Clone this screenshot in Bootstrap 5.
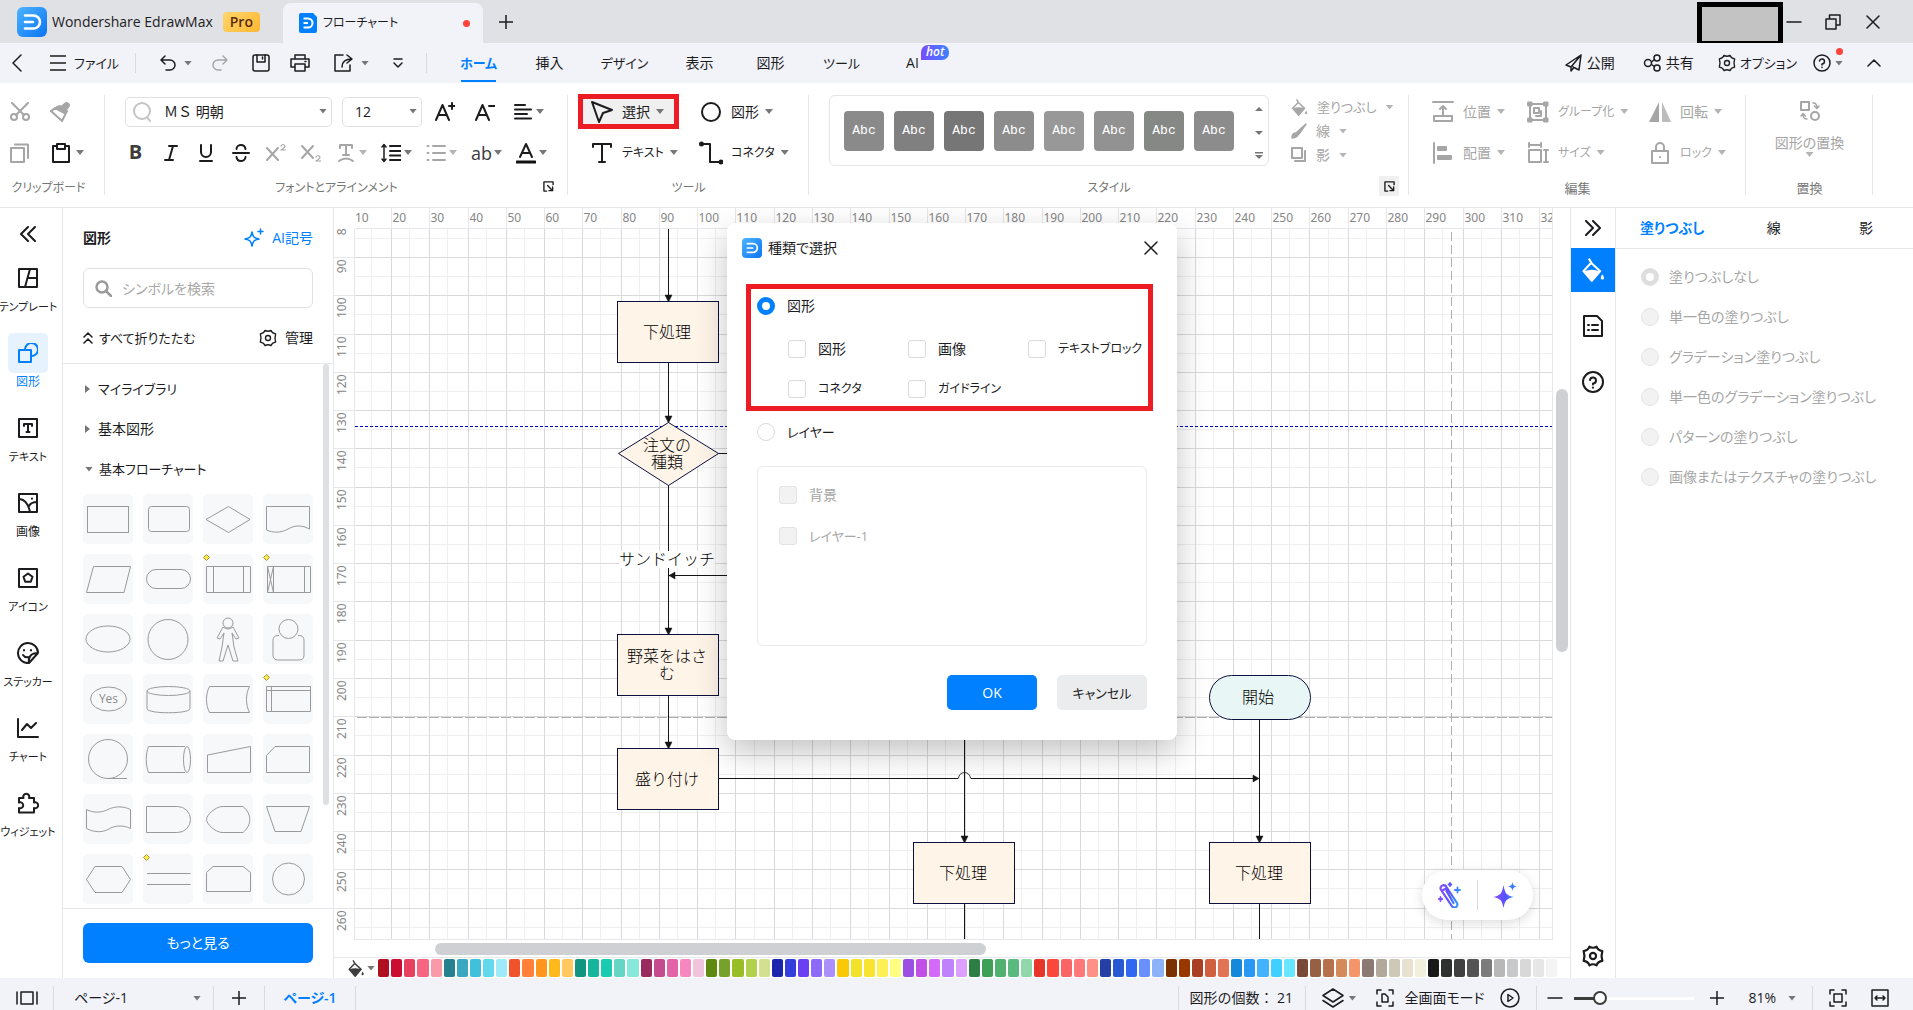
<!DOCTYPE html>
<html lang="ja">
<head>
<meta charset="utf-8">
<meta name="viewport" content="width=device-width, initial-scale=1">
<title>フローチャート - Wondershare EdrawMax</title>
<link href="https://cdn.jsdelivr.net/npm/bootstrap@5.3.0/dist/css/bootstrap.min.css" rel="stylesheet">
<style>
:root{--blue:#0080ff;--ink:#1c1c1e;--dim:#a6a6a6;--rule:#e6e7ea;--bar:#f2f3f9;--mark:#ed1c24}
body{font-family:"Open Sans","Noto Sans CJK JP",sans-serif;font-size:14px;line-height:20px;color:var(--ink);font-feature-settings:"palt";height:100vh;overflow:hidden;background:#fff}
button,select,input{font-feature-settings:inherit}
button{border:0;background:none;padding:0;color:inherit;font-size:inherit;white-space:nowrap}
a{color:inherit;text-decoration:none}
svg{display:block;flex:none}
.ic{fill:none;stroke:currentColor;stroke-width:1.5;stroke-linejoin:round;stroke-linecap:round}
.thick{stroke-width:2}
.kn{font-size:13px}
.kn-s{font-size:12px}
.caret-s{width:8px;height:5px;flex:none;background:#777;clip-path:polygon(0 0,100% 0,50% 100%)}
.dim{color:var(--dim)}
.dim .caret-s{background:#b4b4b4}
.vline{width:1px;background:#d8d9de;flex:none}
/* title bar */
.titlebar{height:43px;background:#e0e1e5}
.brand{width:283px;padding-left:17px;gap:5px;font-size:14px}
.pro{background:linear-gradient(135deg,#ffd56b,#fdb833);color:#5a2c0a;border-radius:4px;height:20px;padding:0 7px;margin-left:5px;font-weight:600}
.doctab{width:200px;height:40px;background:var(--bar);border-radius:8px 8px 0 0;padding:0 13px 0 16px;gap:6px;font-size:12px}
.reddot{width:7px;height:7px;border-radius:50%;background:#ff453a}
.redact{width:86px;height:44px;border:5px solid #000;background:#c3c3c3}
.winbtn{width:40px;height:40px}
/* menu bar */
.menubar{height:40px;background:var(--bar)}
.menubar .mtab{width:71px;text-align:center;line-height:40px;position:relative;font-size:14px}
.menubar .mtab.kn{font-size:13px}
.menubar .mtab.active{color:var(--blue);font-weight:600}
.menubar .mtab.active::after{content:"";position:absolute;left:18px;right:18px;bottom:1px;height:2px;background:var(--blue)}
.hot{position:absolute;left:44px;top:2px;height:15px;padding:0 5px;border-radius:7px 7px 7px 0;background:linear-gradient(90deg,#7a4dff,#3b82ff);color:#fff;font-size:12px;line-height:14px;font-style:italic;font-weight:600}
.mbtn{height:40px}
.filebtn{width:89px}
.quick{width:290px;padding-left:20px}
.helpdot{position:absolute;right:0;top:-6px}
/* ribbon */
.ribbon{height:125px;border-bottom:1px solid var(--rule);padding-top:11px}
.rgroup{position:relative;height:106px;flex:none}
.rgroup::after{content:"";position:absolute;right:0;top:1px;height:100px;width:1px;background:#e4e5e8}
.rrow{height:35px;margin-bottom:6px}
.rlabel{font-size:12px;color:#777;line-height:24px;text-align:center}
.rlabel.kj{font-size:13px}
.rb{height:35px}
.sq{width:40px}
.sq35{width:35px}
.split{width:45px;padding-left:8px;gap:3px}
.glyph{font-size:20px;line-height:20px;color:#3c3c3c;width:20px;text-align:center}
.fsel{height:30px;border:1px solid #e0e1e5;border-radius:5px;font-size:14px;color:var(--ink);appearance:none;background:transparent;padding:0 20px 0 38px;width:100%;line-height:20px}
.fsel.wide{font-feature-settings:normal}
.selwrap{position:relative;height:30px}
.selwrap .caret-s{position:absolute;right:5px;top:12px}
.selwrap svg{position:absolute;left:7px;top:5px}
.tb{height:35px;padding-left:12px;gap:8px}
.tb .caret-s{margin-left:-2px}
.annot{border:5px solid var(--mark);background:#f0f0f0;padding-left:7px;width:101px}
.gallery{border:1px solid #e6e6e9;border-radius:6px;width:440px;height:71px;padding:0 5px 0 14px;gap:10px}
.gs{width:40px;height:40px;border-radius:4px;color:#fff;font:13px/40px "Liberation Mono",monospace}
.stylebtns{padding:1px 0 0 22px}
.stylebtns button{height:24px;gap:9px}
.launch{position:absolute;right:10px;bottom:4px;width:20px;height:20px}
.editgrid{display:grid;grid-template-columns:95px 122px 1fr;grid-auto-rows:35px;row-gap:6px;padding-left:14px;margin-bottom:6px}
.editgrid .tb{padding-left:8px}
/* left rail */
.rail{width:63px;border-right:1px solid var(--rule);padding-top:6px;overflow:hidden;flex:none}
.railitem{height:75px;width:56px;font-size:12px;line-height:18px;color:var(--ink);padding-top:4px}
.railitem.small11{font-size:11px}
.railitem .tile{width:40px;height:40px;border-radius:5px}
.railitem.active{color:var(--blue)}
.railitem.active .tile{background:#e6f3ff}
/* symbol panel */
.sympanel{width:271px;border-right:1px solid var(--rule);flex:none}
.search{height:40px;border:1px solid #e0e1e5;border-radius:6px;padding-left:38px;font-size:14px;width:100%}
.search::placeholder{color:#a8a8a8}
.liblist{border-top:1px solid var(--rule);border-bottom:1px solid var(--rule);position:relative;padding-top:5px}
.libitem{height:40px;gap:8px;padding-left:2px;font-size:13px}
.tri{width:5px;height:8px;background:#777;clip-path:polygon(0 0,100% 50%,0 100%)}
.shapes{display:grid;grid-template-columns:repeat(4,50px);gap:10px;padding-top:5px}
.shapes button{height:50px;background:#f7f8fa;border-radius:5px}
.thumb{background:#cfd0d3;border-radius:6px}
.btn-main{background:var(--blue);color:#fff;border-radius:6px}
/* canvas */
.stage{display:grid;grid-template-columns:21px minmax(0,1fr) 17px;grid-template-rows:21px minmax(0,1fr) 17px 21px;position:relative;min-width:0}
.stage text{fill:#868686;font-size:12px;font-family:"Noto Sans",sans-serif}
.stage .node text{fill:#000;font:300 16px "Noto Sans CJK JP",sans-serif;font-feature-settings:normal;text-anchor:middle}
.ruler-x{border-bottom:1px solid var(--rule);border-right:1px solid var(--rule)}
.ruler-y{border-right:1px solid var(--rule)}
.clip{overflow:hidden;min-width:0;min-height:0}
.palette{grid-column:1/-1;border-top:1px solid var(--rule);padding:1px 0 1px 13px;gap:3px}
.sw{flex:1 1 0;height:18px;border-radius:2px}
.floatpill{position:absolute;right:37px;bottom:58px;width:111px;height:50px;border-radius:25px;background:#fff;box-shadow:0 3px 12px rgba(0,0,0,.14)}
/* dialog */
.dlgwrap{position:absolute;left:0;right:0;top:15px;z-index:5;pointer-events:none}
.dlg{width:450px;height:517px;background:#fff;border-radius:8px;box-shadow:0 12px 32px rgba(0,0,0,.24);pointer-events:auto;padding:0 30px 30px 19px}
.dlg-head{height:50px;margin:0 -11px 11px -4px;gap:6px}
.dlg-mark{border:5px solid var(--mark);height:127px;padding:7px 5px 0 6px;margin-right:-6px}
.form-check-input{margin:0;float:none;flex:none;width:18px;height:18px;border:1px solid #d9dade;background-color:#fff}
.form-check-input[type=checkbox]{border-radius:3px}
.form-check-input[type=radio]:checked{background:#fff;border:5px solid var(--blue)}
.form-check-input:disabled{opacity:1;background-color:#f2f2f2;border-color:#e4e4e4}
.form-check-input[type=radio]:disabled:checked{border-color:#dedede}
.form-check-label{white-space:nowrap}
.form-check-input:disabled~.form-check-label{opacity:1;color:var(--dim)}
.ck{gap:12px}
.ckgrid{display:grid;grid-template-columns:120px 120px 1fr;grid-auto-rows:40px;padding:13px 0 0 31px}
.layerbox{border:1px solid #e8e9ec;border-radius:6px;height:180px;margin-left:11px;padding:7px 21px}
.layerbox>div{height:41px}
.dbtn{width:90px;height:35px;border-radius:5px}
/* right side */
.rrail{width:46px;border-left:1px solid var(--rule);border-right:1px solid var(--rule);flex:none}
.rrail button{width:44px;height:44px}
.props{width:297px;flex:none}
.ptabs{height:41px;border-bottom:1px solid var(--rule);padding:0 40px 0 24px;font-size:14px}
.ptabs>:first-child{margin-right:-16px}
.props .optrow{height:40px;gap:10px;padding-left:25px}
/* status bar */
.status{height:32px;background:var(--bar);padding-top:8px;flex:none}
.status>*{height:24px}
.zoombar{appearance:none;width:120px;background:transparent}
.zoombar::-webkit-slider-runnable-track{height:3px;background:linear-gradient(90deg,#3c3c3c 20%,#fff 20%)}
.zoombar::-webkit-slider-thumb{-webkit-appearance:none;width:14px;height:14px;border-radius:50%;border:2px solid #3c3c3c;background:#fff;margin-top:-6px}
</style>
<script src="https://cdn.jsdelivr.net/npm/bootstrap@5.3.0/dist/js/bootstrap.bundle.min.js"></script>
</head>
<body class="d-flex flex-column">
<svg width="0" height="0" class="position-absolute" aria-hidden="true">
 <defs>
  <linearGradient id="lg" x1="0" y1="0" x2="1" y2="1"><stop offset="0" stop-color="#4db4ff"/><stop offset="1" stop-color="#0a74f5"/></linearGradient>
  <linearGradient id="pg" x1="0" y1="0" x2="1" y2="0"><stop offset="0" stop-color="#8a4dff"/><stop offset=".5" stop-color="#5a50ff"/><stop offset="1" stop-color="#2f9bff"/></linearGradient>
  <symbol id="logo" viewBox="0 0 30 30"><rect width="30" height="30" rx="6" fill="url(#lg)"/><path d="M8 8.500h8.500a6.500 6.500 0 0 1 0 13H8M8 15h8" fill="none" stroke="#fff" stroke-width="2.600" stroke-linecap="round"/></symbol>
  <symbol id="gear" viewBox="0 0 20 20"><path d="M6.800 1.500Q10 3.500 13.200 1.500Q14.500 5 18.500 5.500Q17 10 18.500 14.500Q14.500 15 13.200 18.500Q10 16.500 6.800 18.500Q5.500 15 1.500 14.500Q3 10 1.500 5.500Q5.500 5 6.800 1.500z"/><circle cx="10" cy="10" r="2.800"/></symbol>
  <symbol id="launch" viewBox="0 0 12 12"><path d="M11 4V1H1v10h3M5 5l5 5M10.500 6.500v4h-4"/></symbol>
  <symbol id="drop" viewBox="0 0 20 20"><path d="M6.500 .5L9 4.500 16 11 9 19 2 11 8.500 4" fill="none" stroke="currentColor" stroke-width="1.700" stroke-linejoin="round"/><path d="M2.500 11Q9 8.500 15.500 11L9 18.500z" fill="currentColor"/><path d="M17.800 13.500c2 3 1.500 4.500 0 4.500s-2-1.500 0-4.500z" fill="currentColor"/></symbol>
 </defs>
</svg>

<header class="titlebar d-flex align-items-end flex-shrink-0">
 <div class="brand d-flex align-items-center h-100">
  <svg width="30" height="30"><use href="#logo"/></svg><span class="text-nowrap">Wondershare EdrawMax</span><span class="pro">Pro</span>
 </div>
 <div class="doctab d-flex align-items-center">
  <svg width="18" height="20" viewBox="0 0 18 20"><path d="M2 0h12l4 4v14a2 2 0 0 1-2 2H2a2 2 0 0 1-2-2V2a2 2 0 0 1 2-2z" fill="#0080ff"/><path d="M4.500 5.500H9a4.500 4.500 0 0 1 0 9H4.500M4.500 10H9" fill="none" stroke="#fff" stroke-width="2"/></svg>
  <span class="flex-grow-1">フローチャート</span><span class="reddot"></span>
 </div>
 <button class="d-flex align-items-center justify-content-center h-100 px-3" aria-label="新しいタブ"><svg class="ic" width="14" height="14" viewBox="0 0 14 14"><path d="M7 0v14M0 7h14"/></svg></button>
 <div class="ms-auto d-flex align-items-center me-3 h-100">
  <div class="redact mt-1"></div>
  <button class="winbtn w-auto" aria-label="最小化"><svg class="ic" width="22" height="14" viewBox="0 0 22 14"><path d="M4 7h14"/></svg></button>
  <button class="winbtn ms-2" aria-label="元のサイズに戻す"><svg class="ic m-auto" width="16" height="16" viewBox="0 0 16 16"><path d="M1 5h10v10H1zM4.500 5V1H15v10h-4"/></svg></button>
  <button class="winbtn me-1" aria-label="閉じる"><svg class="ic m-auto" width="14" height="14" viewBox="0 0 14 14"><path d="M1 1l12 12M13 1L1 13"/></svg></button>
 </div>
</header>

<nav class="menubar d-flex align-items-center flex-shrink-0">
 <button class="mbtn px-2 ms-1" aria-label="戻る"><svg class="ic" width="10" height="18" viewBox="0 0 10 18"><path d="M9 1L1 9l8 8"/></svg></button>
 <button class="mbtn filebtn d-flex align-items-center gap-2 ms-3 ps-1 kn"><svg class="ic" width="16" height="16" viewBox="0 0 16 16"><path d="M0 1h16M0 8h16M0 15h16"/></svg>ファイル</button>
 <span class="vline ms-n1" style="height:20px"></span>
 <div class="d-flex align-items-center quick">
  <button class="d-flex align-items-center gap-2 ps-1" aria-label="元に戻す"><svg class="ic" width="16" height="16" viewBox="0 0 16 16"><path d="M5 1L1 5l4 4M1 5h9a5 5 0 0 1 0 10H6"/></svg><i class="caret-s"></i></button>
  <button class="dim ms-3 ps-1" aria-label="やり直し"><svg class="ic" width="16" height="16" viewBox="0 0 16 16"><path d="M11 1l4 4-4 4M15 5H6a5 5 0 0 0 0 10h3"/></svg></button>
  <button class="ms-4" aria-label="保存"><svg class="ic" width="18" height="18" viewBox="0 0 18 18"><rect x="1" y="1" width="16" height="16" rx="2"/><path d="M5 1v7h8V1M10.500 3v2"/></svg></button>
  <button class="ms-3 ps-1" aria-label="印刷"><svg class="ic" width="20" height="18" viewBox="0 0 20 18"><path d="M5 5V1h10v4M5 13H1V5h18v8h-4M5 10h10v7H5zM15 7.500h1"/></svg></button>
  <button class="d-flex align-items-center gap-2 ms-4" aria-label="エクスポート"><svg class="ic" width="19" height="18" viewBox="0 0 19 18"><path d="M9 1H1v16h15v-6M13 1l5 4-5 4M18 5c-6 0-10 2-10 8"/></svg><i class="caret-s"></i></button>
  <button class="ms-4" aria-label="カスタマイズ"><svg class="ic" width="10" height="10" viewBox="0 0 10 10"><path d="M1 1h8M1 5l4 4 4-4"/></svg></button>
 </div>
 <span class="vline" style="height:20px"></span>
 <a class="mtab active kn ms-3" href="#">ホーム</a><a class="mtab" href="#">挿入</a><a class="mtab kn ms-1" href="#">デザイン</a><a class="mtab ms-1" href="#">表示</a><a class="mtab" href="#">図形</a><a class="mtab kn" href="#">ツール</a><a class="mtab ms-n2" href="#">AI<span class="hot">hot</span></a>
 <div class="ms-auto d-flex align-items-center">
  <button class="d-flex align-items-center gap-1 me-4 pe-1"><svg class="ic" width="18" height="18" viewBox="0 0 18 18"><path d="M16 1L1 11l5 2 10-12-2 15-6-3M6 13v4l2.500-3"/></svg>公開</button>
  <button class="d-flex align-items-center gap-1 me-4"><svg class="ic" width="19" height="18" viewBox="0 0 19 18"><circle cx="5" cy="9" r="3.500"/><circle cx="14" cy="4" r="3"/><circle cx="14" cy="14" r="3"/><path d="M8.500 8l3-2.500M8.500 10.500l3 2"/></svg>共有</button>
  <button class="d-flex align-items-center gap-1 me-3 kn"><svg class="ic" width="18" height="18"><use href="#gear"/></svg>オプション</button>
  <button class="d-flex align-items-center gap-1 position-relative me-4" aria-label="ヘルプ"><svg class="ic" width="18" height="18" viewBox="0 0 18 18"><circle cx="9" cy="9" r="8"/><path d="M6.500 7a2.500 2.500 0 1 1 2.500 3v1M9 13.300v.2"/></svg><i class="caret-s"></i><span class="reddot helpdot"></span></button>
  <button class="me-4 pe-2" aria-label="リボンを閉じる"><svg class="ic" width="14" height="8" viewBox="0 0 14 8"><path d="M1 7l6-6 6 6"/></svg></button>
 </div>
</nav>

<section class="ribbon d-flex flex-shrink-0">
 <div class="rgroup" style="width:105px">
  <div class="rrow d-flex dim">
   <button class="rb sq" aria-label="切り取り"><svg class="ic thick m-auto" width="20" height="20" viewBox="0 0 20 20"><circle cx="4" cy="15" r="3"/><circle cx="16" cy="15" r="3"/><path d="M2 1l12 12M18 1L6 13"/></svg></button>
   <button class="rb sq" aria-label="書式のコピー"><svg class="ic thick m-auto" width="20" height="20" viewBox="0 0 20 20"><path d="M1 9L12 19l5-10"/><path d="M1 9l6-4 3-1 5 5 1 1-2 1-9-5z M11 5l5-4q3 0 3 3l-4 5z" fill="currentColor"/></svg></button>
  </div>
  <div class="rrow d-flex">
   <button class="rb sq dim" aria-label="コピー"><svg class="ic thick m-auto" width="20" height="20" viewBox="0 0 20 20"><path d="M1 5h13v14H1zM5 1.500h13V15"/></svg></button>
   <button class="rb d-flex align-items-center" style="width:50px;padding-left:11px;gap:5px" aria-label="貼り付け"><svg class="ic" width="20" height="20" viewBox="0 0 20 20"><path class="thick" d="M5 3H2v16h16V3h-3M6 1h8v5H6z"/></svg><i class="caret-s"></i></button>
  </div>
  <div class="rlabel pe-2">クリップボード</div>
 </div>

 <div class="rgroup" style="width:463px">
  <div class="rrow d-flex align-items-center" style="padding-left:20px">
   <div class="selwrap" style="width:207px"><svg class="ic thick" style="color:#c4c4c4" width="20" height="20" viewBox="0 0 20 20"><circle cx="10" cy="9" r="8"/><path d="M15 15l3 4"/></svg><select class="fsel wide" aria-label="フォント"><option>ＭＳ 明朝</option></select><i class="caret-s"></i></div>
   <div class="selwrap" style="width:80px;margin:0 3px 0 10px"><select class="fsel" style="padding:0 0 0 12px" aria-label="サイズ"><option>12</option></select><i class="caret-s"></i></div>
   <button class="rb sq" aria-label="拡大"><svg class="ic thick m-auto" width="20" height="20" viewBox="0 0 20 20"><path d="M1 18L7.500 3 14 18M4 13h7.500M17 1v6M14 4h6"/></svg></button>
   <button class="rb sq" aria-label="縮小"><svg class="ic thick m-auto" width="20" height="20" viewBox="0 0 20 20"><path d="M1 18L7.500 3 14 18M4 13h7.500M14 4h6"/></svg></button>
   <button class="rb split d-flex align-items-center" aria-label="配置"><svg class="ic thick" width="20" height="20" viewBox="0 0 20 20"><path d="M2 3h10M2 7.500h16M2 12h12M2 16.500h16"/></svg><i class="caret-s"></i></button>
  </div>
  <div class="rrow d-flex align-items-center" style="padding-left:13px">
   <button class="rb sq35" aria-label="太字"><span class="glyph fw-bold">B</span></button>
   <button class="rb sq35" aria-label="斜体"><svg class="ic thick m-auto" width="14" height="18" viewBox="0 0 14 18"><path d="M5 2h8M1 16h8M9 2L5 16"/></svg></button>
   <button class="rb sq35" aria-label="下線"><svg class="ic thick m-auto" width="16" height="18" viewBox="0 0 16 18"><path d="M3 1v7a5 5 0 0 0 10 0V1M2 17h12"/></svg></button>
   <button class="rb sq35" aria-label="取り消し線"><svg class="ic thick m-auto" width="18" height="18" viewBox="0 0 18 18"><path d="M1 9h16M13.500 5C13 2 11 1 9 1S4.500 2.500 4.500 5M4.500 13c.5 3 2.500 4 4.500 4s4.500-1.500 4.500-4"/></svg></button>
   <button class="rb sq35 dim" aria-label="上付き"><svg class="ic thick m-auto" width="20" height="20" viewBox="0 0 20 20"><path d="M1 5l11 12M12 5L1 17"/><path d="M15 3q2-3 4 0 0 1.500-4 4h4.500" stroke-width="1.200"/></svg></button>
   <button class="rb sq35 dim" aria-label="下付き"><svg class="ic thick m-auto" width="20" height="20" viewBox="0 0 20 20"><path d="M1 3l11 12M12 3L1 15"/><path d="M15 14q2-3 4 0 0 1.500-4 4h4.500" stroke-width="1.200"/></svg></button>
   <button class="rb split dim d-flex align-items-center" aria-label="文字効果"><svg class="ic thick" width="20" height="20" viewBox="0 0 20 20"><path d="M4 5V2h12v3M10 2v10M7 12h6M3 18q7-5 14 0"/></svg><i class="caret-s"></i></button>
   <button class="rb split d-flex align-items-center" aria-label="行間"><svg class="ic thick" width="20" height="20" viewBox="0 0 20 20"><path d="M9 3h11M9 8h11M9 12.500h11M9 17h11"/><path d="M3 2v16M1 4l2-2.500L5 4M1 16l2 2.500L5 16" stroke-width="1.500"/></svg><i class="caret-s"></i></button>
   <button class="rb split dim d-flex align-items-center" aria-label="箇条書き"><svg class="ic thick" width="20" height="20" viewBox="0 0 20 20"><path d="M7 3h12M7 10h12M7 17h12M1.500 3h1M1.500 10h1M1.500 17h1"/></svg><i class="caret-s"></i></button>
   <button class="rb split d-flex align-items-center" aria-label="大文字小文字"><span class="glyph" style="font-size:18px">ab</span><i class="caret-s"></i></button>
   <button class="rb split d-flex align-items-center" aria-label="文字色"><svg class="ic thick" width="20" height="22" viewBox="0 0 20 22"><path d="M4 15L10 2l6 13M6 11h8"/><path d="M1 20h18" stroke="#111" stroke-width="3"/></svg><i class="caret-s"></i></button>
  </div>
  <div class="rlabel">フォントとアラインメント</div>
  <button class="launch" aria-label="フォント設定"><svg class="ic m-auto" width="11" height="11"><use href="#launch"/></svg></button>
 </div>

 <div class="rgroup" style="width:241px">
  <div class="rrow d-flex" style="padding-left:10px">
   <button class="tb annot d-flex align-items-center"><svg class="ic thick" width="24" height="24" viewBox="0 0 24 24"><path d="M2 2l20 8-9 3-4 9z"/></svg>選択<i class="caret-s"></i></button>
   <button class="tb d-flex align-items-center ms-2"><svg class="ic thick" width="24" height="24" viewBox="0 0 24 24"><circle cx="12" cy="12" r="9"/></svg>図形<i class="caret-s"></i></button>
  </div>
  <div class="rrow d-flex" style="padding-left:10px">
   <button class="tb kn-s d-flex align-items-center" style="width:109px"><svg class="ic thick" width="24" height="24" viewBox="0 0 24 24"><path d="M3 6V3h18v3M12 3v18M9 21h6"/></svg>テキスト<i class="caret-s"></i></button>
   <button class="tb kn-s d-flex align-items-center"><svg class="ic thick" width="24" height="24" viewBox="0 0 24 24"><path d="M3 3h8v18h11"/><circle cx="2.500" cy="3" r="1.500" fill="currentColor"/><circle cx="22" cy="21" r="1.500" fill="currentColor"/></svg>コネクタ<i class="caret-s"></i></button>
  </div>
  <div class="rlabel">ツール</div>
 </div>

 <div class="rgroup d-flex flex-column flex-grow-1" style="min-width:600px">
  <div class="d-flex" style="padding-left:20px;height:82px">
   <div class="gallery d-flex align-items-center" style="margin-top:1px">
    <button class="gs" style="background:#8a8a8a">Abc</button><button class="gs" style="background:#808080">Abc</button><button class="gs" style="background:#767676">Abc</button><button class="gs" style="background:#8c8c8c">Abc</button><button class="gs" style="background:#989898">Abc</button><button class="gs" style="background:#929292">Abc</button><button class="gs" style="background:#868886">Abc</button><button class="gs" style="background:#8c8c8c">Abc</button>
    <svg class="ms-auto" width="8" height="56" viewBox="0 0 8 56" fill="#777"><path d="M0 8h8L4 4zM0 28h8l-4 4zM0 49h8v1.500H0zM0 52h8l-4 4z"/></svg>
   </div>
   <div class="d-flex flex-column dim stylebtns">
    <button class="d-flex align-items-center kn"><svg width="17" height="17"><use href="#drop"/></svg>塗りつぶし<i class="caret-s ms-n1"></i></button>
    <button class="d-flex align-items-center"><svg class="ic" width="16" height="16" viewBox="0 0 16 16"><path d="M15 1L6 9l2 2zM1 15c0-4 2-5 4-5l2 2c-1 2-3 3-6 3z" fill="currentColor"/></svg>線<i class="caret-s ms-n1"></i></button>
    <button class="d-flex align-items-center"><svg class="ic thick" width="16" height="16" viewBox="0 0 16 16"><path d="M1 1h10v10H1zM14 4v10H4"/></svg>影<i class="caret-s ms-n1"></i></button>
   </div>
  </div>
  <div class="rlabel">スタイル</div>
  <button class="launch d-flex" style="background:#f0f0f0" aria-label="スタイル設定"><svg class="ic m-auto" width="11" height="11"><use href="#launch"/></svg></button>
 </div>

 <div class="rgroup" style="width:337px">
  <div class="dim editgrid">
   <button class="tb d-flex align-items-center"><svg class="ic thick" width="24" height="24" viewBox="0 0 24 24"><path d="M2 2h20M12 15V6M9 9l3-3 3 3M3 16h18v5H3z"/></svg>位置<i class="caret-s"></i></button>
   <button class="tb kn-s d-flex align-items-center"><svg class="ic thick" width="24" height="24" viewBox="0 0 24 24"><path d="M4 4h16v16H4z"/><path d="M2 2h4v4H2zM18 2h4v4h-4zM2 18h4v4H2zM18 18h4v4h-4z" fill="currentColor" stroke-width="1"/><path d="M8 8h5v5H8zM15 11v5h-5"/></svg>グループ化<i class="caret-s"></i></button>
   <button class="tb d-flex align-items-center"><svg width="24" height="24" viewBox="0 0 24 24" fill="currentColor"><path d="M11 2v20H1z"/><path d="M14 2l9 20h-9z" opacity=".75"/></svg>回転<i class="caret-s"></i></button>
   <button class="tb d-flex align-items-center"><svg class="ic thick" width="24" height="24" viewBox="0 0 24 24"><path d="M3 2v20"/><path d="M7 6h8v3H7zM7 15h13v3H7z" fill="currentColor"/></svg>配置<i class="caret-s"></i></button>
   <button class="tb kn-s d-flex align-items-center"><svg class="ic thick" width="24" height="24" viewBox="0 0 24 24"><path d="M3 9h12v12H3zM3 4h12M3 2v4M15 2v4M20 9v12M18 9h4M18 21h4"/></svg>サイズ<i class="caret-s"></i></button>
   <button class="tb kn-s d-flex align-items-center"><svg class="ic thick" width="24" height="24" viewBox="0 0 24 24"><path d="M4 10h16v12H4zM8 10V6a4 4 0 0 1 8 0v4M12 16v.2"/></svg>ロック<i class="caret-s"></i></button>
  </div>
  <div class="rlabel kj">編集</div>
 </div>

 <div class="rgroup me-5" style="width:127px">
  <button class="d-flex flex-column align-items-center w-100 dim" style="height:82px;padding-top:7px;gap:13px"><svg class="ic thick" width="20" height="20" viewBox="0 0 20 20"><path d="M1 1h8v8H1z"/><circle cx="15" cy="15" r="4"/><path d="M13 2q4 0 4 5M14.500 5L17 7.500 19 5M7 18q-4 0-4-5M1 15l2-2.500L5.500 15" stroke-width="1.500"/></svg><span class="d-flex flex-column align-items-center" style="line-height:18px">図形の置換<i class="caret-s"></i></span></button>
  <div class="rlabel kj">置換</div>
 </div>
</section>

<main class="d-flex flex-grow-1" style="min-height:0">
 <nav class="rail d-flex flex-column">
  <button style="height:40px;width:56px" aria-label="折りたたむ"><svg class="ic thick m-auto" width="16" height="16" viewBox="0 0 16 16"><path d="M8 1L1 8l7 7M15 1L8 8l7 7"/></svg></button>
  <button class="railitem small11 d-flex flex-column align-items-center"><span class="tile d-flex"><svg class="ic thick m-auto" width="20" height="20" viewBox="0 0 20 20"><path d="M1 1h18v18H1zM12 1L7 19M10 10h9"/></svg></span><span>テンプレート</span></button>
  <button class="railitem active d-flex flex-column align-items-center"><span class="tile d-flex"><svg class="ic thick m-auto" width="20" height="20" viewBox="0 0 20 20"><path d="M1 7h12v12H1zM7 6a6.500 6.500 0 1 1 7 7"/></svg></span><span>図形</span></button>
  <button class="railitem small11 d-flex flex-column align-items-center"><span class="tile d-flex"><svg class="ic thick m-auto" width="20" height="20" viewBox="0 0 20 20"><path d="M1 1h18v18H1zM6 8V6h8v2M10 6v8M8.500 14h3"/></svg></span><span>テキスト</span></button>
  <button class="railitem d-flex flex-column align-items-center"><span class="tile d-flex"><svg class="ic thick m-auto" width="20" height="20" viewBox="0 0 20 20"><path d="M1 1h18v18H1zM1 6c5 0 9 4 11 13M11 13q2-4 8-4M14 5.500v.2"/></svg></span><span>画像</span></button>
  <button class="railitem small11 d-flex flex-column align-items-center"><span class="tile d-flex"><svg class="ic thick m-auto" width="20" height="20" viewBox="0 0 20 20"><path d="M1 1h18v18H1zM10 5.500l4.500 3.300-1.700 5H7.200l-1.700-5z"/></svg></span><span>アイコン</span></button>
  <button class="railitem small11 d-flex flex-column align-items-center"><span class="tile d-flex"><svg class="ic thick m-auto" width="22" height="22" viewBox="0 0 22 22"><path d="M12 21A10 10 0 1 1 21 11zM12 21c-1-6 2-10 9-10M7 8v.5M14 8v.5M6 13q2 3 5 2"/></svg></span><span>ステッカー</span></button>
  <button class="railitem small11 d-flex flex-column align-items-center"><span class="tile d-flex"><svg class="ic thick m-auto" width="22" height="20" viewBox="0 0 22 20"><path d="M1 1v18h20M5 12l5-6 4 4 5-5"/></svg></span><span>チャート</span></button>
  <button class="railitem small11 d-flex flex-column align-items-center"><span class="tile d-flex"><svg class="ic thick m-auto" width="22" height="22" viewBox="0 0 22 22"><path d="M2 6h4.500a3 3 0 1 1 5.500 0h5v4.500a3 3 0 1 1 0 5.500v4.500H2v-4.500a3 3 0 1 0 0-5.500z"/></svg></span><span>ウィジェット</span></button>
 </nav>

 <aside class="sympanel d-flex flex-column">
  <div class="px-3 mx-1 d-flex flex-column" style="height:155px">
   <div class="d-flex align-items-center" style="height:60px"><b>図形</b><a href="#" class="ms-auto d-flex align-items-center gap-2" style="color:var(--blue)"><svg class="ic" width="20" height="20" viewBox="0 0 20 20"><path d="M8 4c1 5 2 6 7 7-5 1-6 2-7 7-1-5-2-6-7-7 5-1 6-2 7-7zM16.500 1v5M14 3.500h5"/></svg>AI記号</a></div>
   <div class="position-relative"><input class="search" type="text" placeholder="シンボルを検索" aria-label="シンボルを検索"><svg class="ic position-absolute top-0 start-0" style="margin:12px;color:#9a9a9a;stroke-width:2.500" width="17" height="17" viewBox="0 0 17 17"><circle cx="7" cy="7" r="5.500"/><path d="M11 11l5 5"/></svg></div>
   <div class="d-flex align-items-center flex-grow-1 pb-1 pt-2"><button class="d-flex align-items-center kn" style="gap:6px"><svg class="ic" width="10" height="12" viewBox="0 0 10 12"><path d="M1 5l4-4 4 4M1 11l4-4 4 4"/></svg>すべて折りたたむ</button><button class="ms-auto d-flex align-items-center gap-2"><svg class="ic" width="18" height="18"><use href="#gear"/></svg>管理</button></div>
  </div>
  <div class="liblist px-3 flex-grow-1 overflow-hidden">
   <div class="mx-1">
    <div class="libitem d-flex align-items-center"><i class="tri"></i>マイライブラリ</div>
    <div class="libitem d-flex align-items-center" style="font-size:14px"><i class="tri"></i>基本図形</div>
    <div class="libitem d-flex align-items-center" style="gap:6px"><i class="caret-s"></i>基本フローチャート</div>
    <div class="shapes" id="shapes"></div>
   </div>
   <div class="thumb position-absolute top-0 end-0 me-1" style="width:6px;height:81%;background:#dfe0e3"></div>
  </div>
  <div class="px-3 mx-1" style="padding:14px 0;height:69px"><button class="btn-main w-100" style="height:40px">もっと見る</button></div>
 </aside>

 <section class="stage flex-grow-1">
  <div></div>
  <div class="clip ruler-x"><svg width="100%" height="21" id="rx"></svg></div>
  <div></div>
  <div class="clip ruler-y"><svg width="21" height="100%" id="ry"></svg></div>
  <div class="clip" style="border-right:1px solid var(--rule);border-bottom:1px solid var(--rule)">
   <svg width="100%" height="100%" id="board">
    <g id="grid" shape-rendering="crispEdges"></g>
    <g transform="translate(-355,-229)">
     <g fill="none" shape-rendering="crispEdges">
      <path d="M355 426.500H4000" stroke="#0000c0" stroke-dasharray="3 2"/>
      <path d="M357 717.500H4000" stroke="#b0b0b0" stroke-dasharray="10 2"/>
      <path d="M1451.500 232V3000" stroke="#b0b0b0" stroke-dasharray="9 4"/>
      <path d="M668.500 229V640M668.500 696V748M668 575.500H900M718 453.500H900M719 778.500H958M971 778.500H1255M964.500 700V842M964.500 903V1100M1259.500 720V842M1259.500 903V1100" stroke="#151515"/>
     </g>
     <path d="M958.500 778.500a6 6 0 0 1 12 0" fill="none" stroke="#333"/>
     <path d="M665 295h7l-3.500 7zM665 416h7l-3.500 7zM665 628h7l-3.500 7zM665 742h7l-3.500 7zM961 836h7l-3.500 7zM1256 836h7l-3.500 7zM1253 775v7l6-3.500zM675 572v7l-6-3.500z" fill="#151515" stroke="#151515" stroke-width=".5"/>
     <g class="node" fill="#fff4e8" stroke-width="1">
      <g stroke="#0c1040"><rect x="617.500" y="301.500" width="101" height="61"/><path d="M668.500 422.500L718.500 453.500 668.500 485.500 618.500 453.500z"/><rect x="617.500" y="634.500" width="101" height="61"/><rect x="617.500" y="748.500" width="101" height="61"/><rect x="913.500" y="842.500" width="101" height="61"/><rect x="1209.500" y="842.500" width="101" height="61"/><rect x="1209.500" y="675.500" width="101" height="44" rx="22" fill="#e8f7f5"/></g>
      <rect x="619" y="551" width="96" height="17" fill="#fff"/>
      <text x="667" y="338">下処理</text><text x="667" y="451">注文の</text><text x="667" y="468">種類</text>
      <text x="667" y="565">サンドイッチ</text>
      <text x="667" y="662">野菜をはさ</text><text x="667" y="679">む</text><text x="667" y="785">盛り付け</text>
      <text x="963" y="879">下処理</text><text x="1259" y="879">下処理</text><text x="1258" y="703">開始</text>
     </g>
    </g>
   </svg>
  </div>
  <div class="clip"><div class="thumb" style="width:12px;height:37%;margin:160px 0 0 3px"></div></div>
  <div></div>
  <div class="d-flex align-items-center"><div class="thumb" style="height:12px;width:46%;margin-left:80px"></div></div>
  <div></div>
  <div class="palette d-flex align-items-center"><button class="d-flex align-items-center" style="color:#3c3c3c;gap:2px" aria-label="塗りつぶし色"><svg width="18" height="17" viewBox="0 0 20 20"><use href="#drop"/></svg><i class="caret-s"></i></button><div class="d-flex flex-grow-1" style="gap:2px" id="pal"></div></div>

  <div class="floatpill d-flex align-items-center justify-content-around px-2">
   <button aria-label="AI ツール"><svg width="24" height="26" viewBox="0 0 24 26" fill="none" stroke="url(#pg)" stroke-width="2.200" stroke-linecap="round"><path d="M2.800 7.500a3 3 0 0 1 5.600-2.500L19 21a3 3 0 0 1-5.200 3zM5 8l3.500-1.500M8.500 9l7 12"/><path d="M12 1v3M10.500 2.500h3M19.500 5.500v5M17 8h5M2.500 15v4M.8 17h3.500" stroke-width="1.800"/></svg></button>
   <span class="vline" style="height:30px"></span>
   <button aria-label="AI アシスタント"><svg width="24" height="26" viewBox="0 0 24 26" fill="url(#pg)"><path d="M10.500 3c1.500 8.500 3 10.500 10.500 12-7.500 1.500-9 3.500-10.500 11-1.500-7.500-3-9.500-10.500-11C7.500 13.500 9 11.500 10.500 3zM19.500 0c.5 3 1.500 4 4.500 4.500-3 .5-4 1.500-4.500 4.500-.5-3-1.500-4-4.500-4.500 3-.5 4-1.500 4.500-4.500z"/></svg></button>
  </div>

  <div class="dlgwrap d-flex justify-content-center">
   <form class="dlg d-flex flex-column" role="dialog" aria-label="種類で選択">
    <div class="dlg-head d-flex align-items-center"><svg width="20" height="20"><use href="#logo"/></svg><span>種類で選択</span><button type="button" class="ms-auto" aria-label="閉じる"><svg class="ic" width="14" height="14" viewBox="0 0 14 14"><path d="M1 1l12 12M13 1L1 13"/></svg></button></div>
    <div class="dlg-mark">
     <div class="d-flex align-items-center ck"><input class="form-check-input" type="radio" name="kind" id="k1" checked><label class="form-check-label" for="k1">図形</label></div>
     <div class="ckgrid">
      <div class="d-flex align-items-center ck"><input class="form-check-input" type="checkbox" id="c1"><label class="form-check-label" for="c1">図形</label></div>
      <div class="d-flex align-items-center ck"><input class="form-check-input" type="checkbox" id="c2"><label class="form-check-label" for="c2">画像</label></div>
      <div class="d-flex align-items-center ck"><input class="form-check-input" type="checkbox" id="c3"><label class="form-check-label kn-s" for="c3">テキストブロック</label></div>
      <div class="d-flex align-items-center ck"><input class="form-check-input" type="checkbox" id="c4"><label class="form-check-label kn-s" for="c4">コネクタ</label></div>
      <div class="d-flex align-items-center ck"><input class="form-check-input" type="checkbox" id="c5"><label class="form-check-label kn-s" for="c5">ガイドライン</label></div>
     </div>
    </div>
    <div class="d-flex align-items-center ck" style="margin:11px 0 0 11px"><input class="form-check-input" type="radio" name="kind" id="k2"><label class="form-check-label kn" for="k2">レイヤー</label></div>
    <div class="layerbox mt-4">
     <div class="d-flex align-items-center ck"><input class="form-check-input" type="checkbox" id="l1" disabled><label class="form-check-label" for="l1">背景</label></div>
     <div class="d-flex align-items-center ck"><input class="form-check-input" type="checkbox" id="l2" disabled><label class="form-check-label kn" for="l2">レイヤー-1</label></div>
    </div>
    <div class="d-flex justify-content-end mt-auto" style="gap:20px"><button type="button" class="dbtn btn-main">OK</button><button type="button" class="dbtn kn" style="background:#ebecee">キャンセル</button></div>
   </form>
  </div>
 </section>

 <nav class="rrail d-flex flex-column">
  <button style="height:40px" aria-label="展開"><svg class="ic thick m-auto" width="16" height="16" viewBox="0 0 16 16"><path d="M1 1l7 7-7 7M8 1l7 7-7 7"/></svg></button>
  <button class="btn-main rounded-0" aria-label="スタイル"><svg class="m-auto" width="24" height="24"><use href="#drop"/></svg></button>
  <button aria-label="ページ設定" style="height:68px"><svg class="ic thick m-auto" width="20" height="22" viewBox="0 0 20 22"><path d="M1 1h13l5 5v15H1zM5 10h1M9 10h6M5 15h1M9 15h6"/></svg></button>
  <button aria-label="ヘルプ"><svg class="ic thick m-auto" width="22" height="22" viewBox="0 0 22 22"><circle cx="11" cy="11" r="10"/><path d="M8 9a3 3 0 1 1 3 3.500v1M11 16.500v.3"/></svg></button>
  <button class="mt-auto" aria-label="設定"><svg class="ic thick m-auto" width="22" height="22"><use href="#gear"/></svg></button>
 </nav>

 <aside class="props">
  <div class="ptabs d-flex align-items-center justify-content-between"><a href="#" class="fw-semibold" style="color:var(--blue)">塗りつぶし</a><a href="#">線</a><a href="#">影</a></div>
  <div style="padding-top:8px">
   <div class="optrow d-flex align-items-center"><input class="form-check-input" type="radio" name="fill" id="f1" disabled checked><label class="form-check-label" for="f1">塗りつぶしなし</label></div>
   <div class="optrow d-flex align-items-center"><input class="form-check-input" type="radio" name="fill" id="f2" disabled><label class="form-check-label" for="f2">単一色の塗りつぶし</label></div>
   <div class="optrow d-flex align-items-center"><input class="form-check-input" type="radio" name="fill" id="f3" disabled><label class="form-check-label" for="f3">グラデーション塗りつぶし</label></div>
   <div class="optrow d-flex align-items-center"><input class="form-check-input" type="radio" name="fill" id="f4" disabled><label class="form-check-label" for="f4">単一色のグラデーション塗りつぶし</label></div>
   <div class="optrow d-flex align-items-center"><input class="form-check-input" type="radio" name="fill" id="f5" disabled><label class="form-check-label" for="f5">パターンの塗りつぶし</label></div>
   <div class="optrow d-flex align-items-center"><input class="form-check-input" type="radio" name="fill" id="f6" disabled><label class="form-check-label" for="f6">画像またはテクスチャの塗りつぶし</label></div>
  </div>
 </aside>
</main>

<footer class="status d-flex">
 <button class="ps-3" style="width:53px" aria-label="ページ一覧"><svg class="ic" width="22" height="14" viewBox="0 0 22 14"><path d="M1 1v12M21 1v12M5 1h12v12H5z"/></svg></button>
 <span class="vline"></span>
 <button class="d-flex align-items-center justify-content-between" style="width:159px;padding:0 12px 0 20px">ページ-1<i class="caret-s"></i></button>
 <span class="vline"></span>
 <button style="width:50px" aria-label="ページを追加"><svg class="ic m-auto" width="14" height="14" viewBox="0 0 14 14"><path d="M7 0v14M0 7h14"/></svg></button>
 <span class="vline"></span>
 <button class="fw-semibold" style="width:90px;color:var(--blue)">ページ-1</button>
 <span class="vline"></span>
 <div class="ms-auto d-flex align-items-center">
  <span class="vline h-100"></span>
  <span style="width:126px;padding-left:10px;font-feature-settings:normal">図形の個数： 21</span>
  <span class="vline h-100"></span>
  <button class="d-flex align-items-center gap-1 ms-3" aria-label="レイヤー"><svg class="ic" width="22" height="20" viewBox="0 0 22 20"><path d="M11 1l10 6.500-10 6.500L1 7.500zM1 12.500L11 19l10-6.500"/></svg><i class="caret-s"></i></button>
  <button class="d-flex align-items-center ms-3 ps-1" style="width:120px;gap:10px"><svg class="ic" width="18" height="18" viewBox="0 0 18 18"><path d="M1 5V1h4M13 1h4v4M17 13v4h-4M5 17H1v-4M6 5h3l3 3v5H6z"/></svg><span>全画面モード</span></button>
  <button class="ms-2" aria-label="プレゼンテーション"><svg class="ic" width="20" height="20" viewBox="0 0 20 20"><circle cx="10" cy="10" r="9"/><path d="M8 6.500v7l5-3.500z"/></svg></button>
  <span class="vline h-100 mx-2 ms-3"></span>
  <button aria-label="縮小"><svg class="ic" width="21" height="14" viewBox="0 0 21 14"><path d="M3 7h14"/></svg></button>
  <input class="zoombar ms-2" type="range" min="0" max="100" value="18" aria-label="ズーム">
  <button class="ms-3" aria-label="拡大"><svg class="ic" width="14" height="14" viewBox="0 0 14 14"><path d="M7 0v14M0 7h14"/></svg></button>
  <button class="d-flex align-items-center ms-4" style="gap:12px">81%<i class="caret-s"></i></button>
  <span class="vline h-100 ms-3"></span>
  <button class="ms-3" aria-label="ページに合わせる"><svg class="ic" width="18" height="18" viewBox="0 0 18 18"><path d="M1 5V1h4M13 1h4v4M17 13v4h-4M5 17H1v-4M5 5h8v8H5z"/></svg></button>
  <button class="ms-4 me-4" aria-label="幅に合わせる"><svg class="ic" width="18" height="18" viewBox="0 0 18 18"><path d="M1 1h16v16H1zM4 9h10M6 7L4 9l2 2M12 7l2 2-2 2"/></svg></button>
 </div>
</footer>

<script>
const shapes=[
'<rect x="4.500" y="12.500" width="41" height="26"/>',
'<rect x="5.500" y="12.500" width="41" height="25" rx="3"/>',
'<path d="M3 25.500L25.500 12.500 47 25.500 25.500 38.500z"/>',
'<path d="M3.500 12.500H46.500V35C39 31 32 31 25 35C18 39 10 39 3.500 36z"/>',
'<path d="M10.500 12.500H47.500L41 38.500H3.500z"/>',
'<rect x="3.500" y="15.500" width="44" height="19" rx="9.500"/>',
'!<path d="M3.500 12.500h44v26h-44zM10.500 12.500v26M40.500 12.500v26"/>',
'!<path d="M4.500 12.500h43v26h-43zM10.500 12.500v26M41.500 12.500v26M4.500 12.500l6 26M10.500 12.500l-6 26"/>',
'<ellipse cx="25" cy="25" rx="22" ry="13"/>',
'<circle cx="25" cy="25.500" r="20"/>',
'<circle cx="25" cy="9" r="5"/><path d="M20 13l-6 11 3 1 4-6-2 14-3 14h4l5-16 5 16h5l-4-14-2-14 4 6 3-1-6-11q-5 4-10 0"/>',
'<circle cx="25.500" cy="15" r="9.500"/><path d="M16 21.500h-1q-5 0-5 5V41q0 5 5 5h21q5 0 5-5V26.500q0-5-5-5h-1"/>',
'<ellipse cx="25.500" cy="25" rx="18" ry="12"/><text x="25.500" y="29" fill="#8c8c8c" stroke="none" font-size="12" text-anchor="middle">Yes</text>',
'<ellipse cx="25.500" cy="17" rx="21.500" ry="4.500"/><path d="M4 17V35c2 5 41 5 43 0V17"/>',
'<path d="M6.500 12.500H46.500C42.500 20 42.500 31 46.500 38.500H6.500C2.500 31 2.500 20 6.500 12.500z"/>',
'!<path d="M3.500 12.500h44v25h-44zM8.500 12.500v25M3.500 16.500h44"/>',
'<circle cx="25" cy="25" r="19.500"/><path d="M25 44.500H44"/>',
'<path d="M42 12.500H5.500C2.500 20 2.500 31 5.500 38.500H42"/><ellipse cx="44" cy="25.500" rx="3.500" ry="13"/>',
'<path d="M4.500 21L47.500 12.500V38.500H4.500z"/>',
'<path d="M12 12.500H46.500V38.500H3.500V21.500z"/>',
'<path d="M3.500 15.500C10 19 18 19 25 15.500 32 12 40 12 47.500 15.500V34.500C40 31 32 31 25 35.500 18 39 10 38 3.500 34.500z"/>',
'<path d="M3.500 12.500H34.500a13 13 0 0 1 0 26H3.500z"/>',
'<path d="M19 12.500H40C49 20 49 31 40 38.500H19C12 38 3.500 30 3.500 25.500 3.500 21 12 13 19 12.500z"/>',
'<path d="M3.500 12.500H46.500L38 37.500H12z"/>',
'<path d="M12 12.500H39L47.500 25.500 39 38.500H12L3.500 25.500z"/>',
'!<path d="M4 19.500H47.500M4 30.500H47.500"/>',
'<path d="M10 12.500H40L47.500 18.500V37.500H3.500V18.500z"/>',
'<circle cx="25.500" cy="25" r="16"/>'];
document.getElementById('shapes').innerHTML=shapes.map((s,i)=>{
 const y=s[0]==='!'; if(y)s=s.slice(1)+'<path d="M3.500 .5l3 3-3 3-3-3z" fill="#ffe94a" stroke="#a09840"/>';
 return `<button aria-label="図形 ${i+1}"><svg width="50" height="50" viewBox="0 0 50 50" fill="none" stroke="#9a9a9a">${s}</svg></button>`}).join('');

const colors='ae1022 cc0d33 e84060 f76680 f99aaa 26808f 3aa8c0 40c0da 62d8ee 9eeaf8 f0522b ff8038 ff961e ffb81a ffc860 129580 16b59c 1acbb2 66d6c4 86e8d8 982a60 c64a8e e264a6 f886c0 f0c4dc 5e8a12 76a22c 98be26 b2d04c d2e090 1c26ac 343edb 6a40f2 8e6af8 aa90f8 f9c806 f4e22a f8e42e fcf054 fefe80 9a50e0 c250e6 d46af8 c082fc dca0fc 2c7e44 3ea056 50b070 5aba80 90d8aa e6362c fa483c fa6464 fe7878 fe9088 2440a6 2858d2 3068f2 6890ff 8cb2f8 7a3000 963800 a84024 d06040 e07454 1688da 2898f4 42b2ff 3ed0ff 68e6ff 7a4a36 966044 b6704c d48a5a f4966a 8a7a72 b2a89c cec8b6 e8e0d0 f2f0dc 181818 2e2f2f 404040 545454 7c7c7c b8b8b8 c8c9cb d8d8d8 e6e6e6 f4f4f4 ffffff'.split(' ');
document.getElementById('pal').innerHTML=colors.map(c=>`<span class="sw" style="background:#${c}"></span>`).join('');

// 10 mm on the page at the current zoom
const step=38.27, x20=36, y90=28;
const rx=document.getElementById('rx'), ry=document.getElementById('ry');
function drawGrid(){
 const w=rx.parentElement.clientWidth, h=ry.parentElement.clientHeight;
 let minor='',major='',tx='',ty='';
 for(let i=-1;x20+i*step<w;i++){
  const x=Math.round(x20+i*step)+.5, xm=Math.round(x20+i*step+step/2)-.5;
  major+=`M${x} 0V${h}`; minor+=`M${xm} 0V${h}`;
  tx+=`<path d="M${x} 0V21" stroke="#e6e7ea"/><text x="${Math.max(x+1,0)}" y="14">${20+i*10}</text>`;
 }
 for(let i=-1;y90+i*step<h;i++){
  const y=Math.round(y90+i*step)+.5, ym=Math.round(y90+i*step+step/2)+.5;
  major+=`M0 ${y}H${w}`; minor+=`M0 ${ym}H${w}`;
  ty+=`<path d="M0 ${y}H21" stroke="#e6e7ea"/><text transform="translate(12,${y+2}) rotate(-90)" text-anchor="end">${90+i*10}</text>`;
 }
 document.getElementById('grid').innerHTML=`<path d="${minor}" stroke="#efefef"/><path d="${major}" stroke="#dadada"/>`;
 rx.innerHTML=tx; ry.innerHTML=ty;
}
drawGrid();
addEventListener('resize',drawGrid);
</script>
</body>
</html>
